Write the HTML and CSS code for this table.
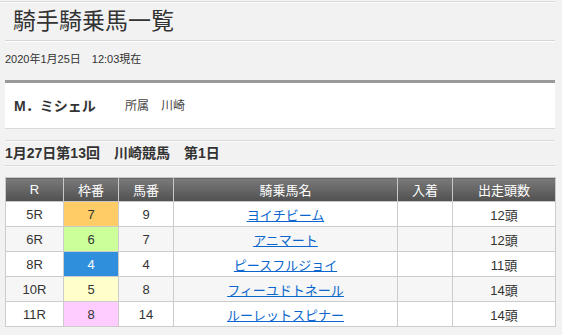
FILE: index.html
```html
<!DOCTYPE html>
<html lang="ja">
<head>
<meta charset="utf-8">
<title>騎手騎乗馬一覧</title>
<link rel="stylesheet" href="styles.css">
</head>
<body>
<div class="page">
  <div class="topline"></div>
  <div class="inner">
    <h1 class="title">騎手騎乗馬一覧</h1>
    <p class="date">2020年1月25日　12:03現在</p>
    <div class="profile">
      <span class="name">M．ミシェル</span>
      <span class="belong">所属　川崎</span>
    </div>
    <h2 class="race">1月27日第13回　川崎競馬　第1日</h2>
    <table class="list">
      <colgroup>
        <col class="c-r"><col class="c-waku"><col class="c-uma"><col class="c-name"><col class="c-chaku"><col class="c-tosu">
      </colgroup>
      <thead>
        <tr><th>R</th><th>枠番</th><th>馬番</th><th>騎乗馬名</th><th>入着</th><th>出走頭数</th></tr>
      </thead>
      <tbody>
        <tr><td>5R</td><td class="w7">7</td><td>9</td><td><a href="#">ヨイチビーム</a></td><td></td><td>12頭</td></tr>
        <tr class="alt"><td>6R</td><td class="w6">6</td><td>7</td><td><a href="#">アニマート</a></td><td></td><td>12頭</td></tr>
        <tr><td>8R</td><td class="w4">4</td><td>4</td><td><a href="#">ピースフルジョイ</a></td><td></td><td>11頭</td></tr>
        <tr class="alt"><td>10R</td><td class="w5">5</td><td>8</td><td><a href="#">フィーユドトネール</a></td><td></td><td>14頭</td></tr>
        <tr><td>11R</td><td class="w8">8</td><td>14</td><td><a href="#">ルーレットスピナー</a></td><td></td><td>14頭</td></tr>
      </tbody>
    </table>
  </div>
</div>
</body>
</html>
```
FILE: styles.css
```css
html, body {
  margin: 0;
  padding: 0;
  background: #f2f2f2;
}
body {
  font-family: "Liberation Sans", Arial, "Noto Sans CJK JP", sans-serif;
  color: #333;
}
.page {
  width: 555px;
  padding-top: 1px;
}
.topline {
  height: 1px;
  background: #dcdcdc;
  box-shadow: 0 1px 0 #fafafa;
}
.inner {
  padding-left: 5px;
}
.title {
  margin: 0;
  height: 38px;
  line-height: 38px;
  padding-left: 8px;
  font-size: 23px;
  font-weight: normal;
  color: #333;
  border-bottom: 1px solid #d6d6d6;
  box-shadow: 0 1px 0 #fff;
}
.date {
  margin: 11px 0 0;
  font-size: 11px;
  line-height: 15px;
  color: #333;
}
.profile {
  margin-top: 13px;
  border-top: 3px solid #999;
  border-bottom: 1px solid #dadada;
  background: #fff;
  height: 49px;
  box-sizing: border-box;
  display: flex;
  align-items: center;
  padding: 0 0 2px 9px;
}
.name {
  font-size: 14px;
  font-weight: bold;
  width: 111px;
}
.belong {
  font-size: 12px;
  color: #444;
}
.race {
  margin: 11px 0 0;
  font-size: 14px;
  font-weight: bold;
  line-height: 24px;
  border-top: 1px solid #dadada;
  border-bottom: 1px solid #dadada;
  box-shadow: inset 0 1px 0 #fafafa, 0 1px 0 #fafafa;
  color: #333;
}
.list {
  margin-top: 11px;
  width: 550px;
  border-collapse: collapse;
  table-layout: fixed;
  font-size: 13px;
}
.c-r { width: 58px; }
.c-waku { width: 55px; }
.c-uma { width: 55px; }
.c-name { width: 224px; }
.c-chaku { width: 55px; }
.c-tosu { width: 103px; }
.list th,
.list td {
  border: 1px solid #cccccc;
  text-align: center;
  padding: 0;
}
.list th {
  height: 23px;
  color: #fff;
  font-weight: normal;
  background: linear-gradient(#7a7a7a, #505050);
  border-color: #c8c8c8;
}
.list td {
  height: 24px;
  background: #fff;
  color: #333;
}
.list tr.alt td {
  background: #f6f6f6;
}
.list td.w7 { background: #ffcc66; }
.list td.w6 { background: #ccff99; }
.list td.w4 { background: #2f8fdd; color: #fff; }
.list td.w5 { background: #ffffcc; }
.list td.w8 { background: #ffccff; }
.list tr.alt td.w6 { background: #ccff99; }
.list tr.alt td.w5 { background: #ffffcc; }
.list a {
  color: #0a66cc;
  text-decoration: underline;
}
```
